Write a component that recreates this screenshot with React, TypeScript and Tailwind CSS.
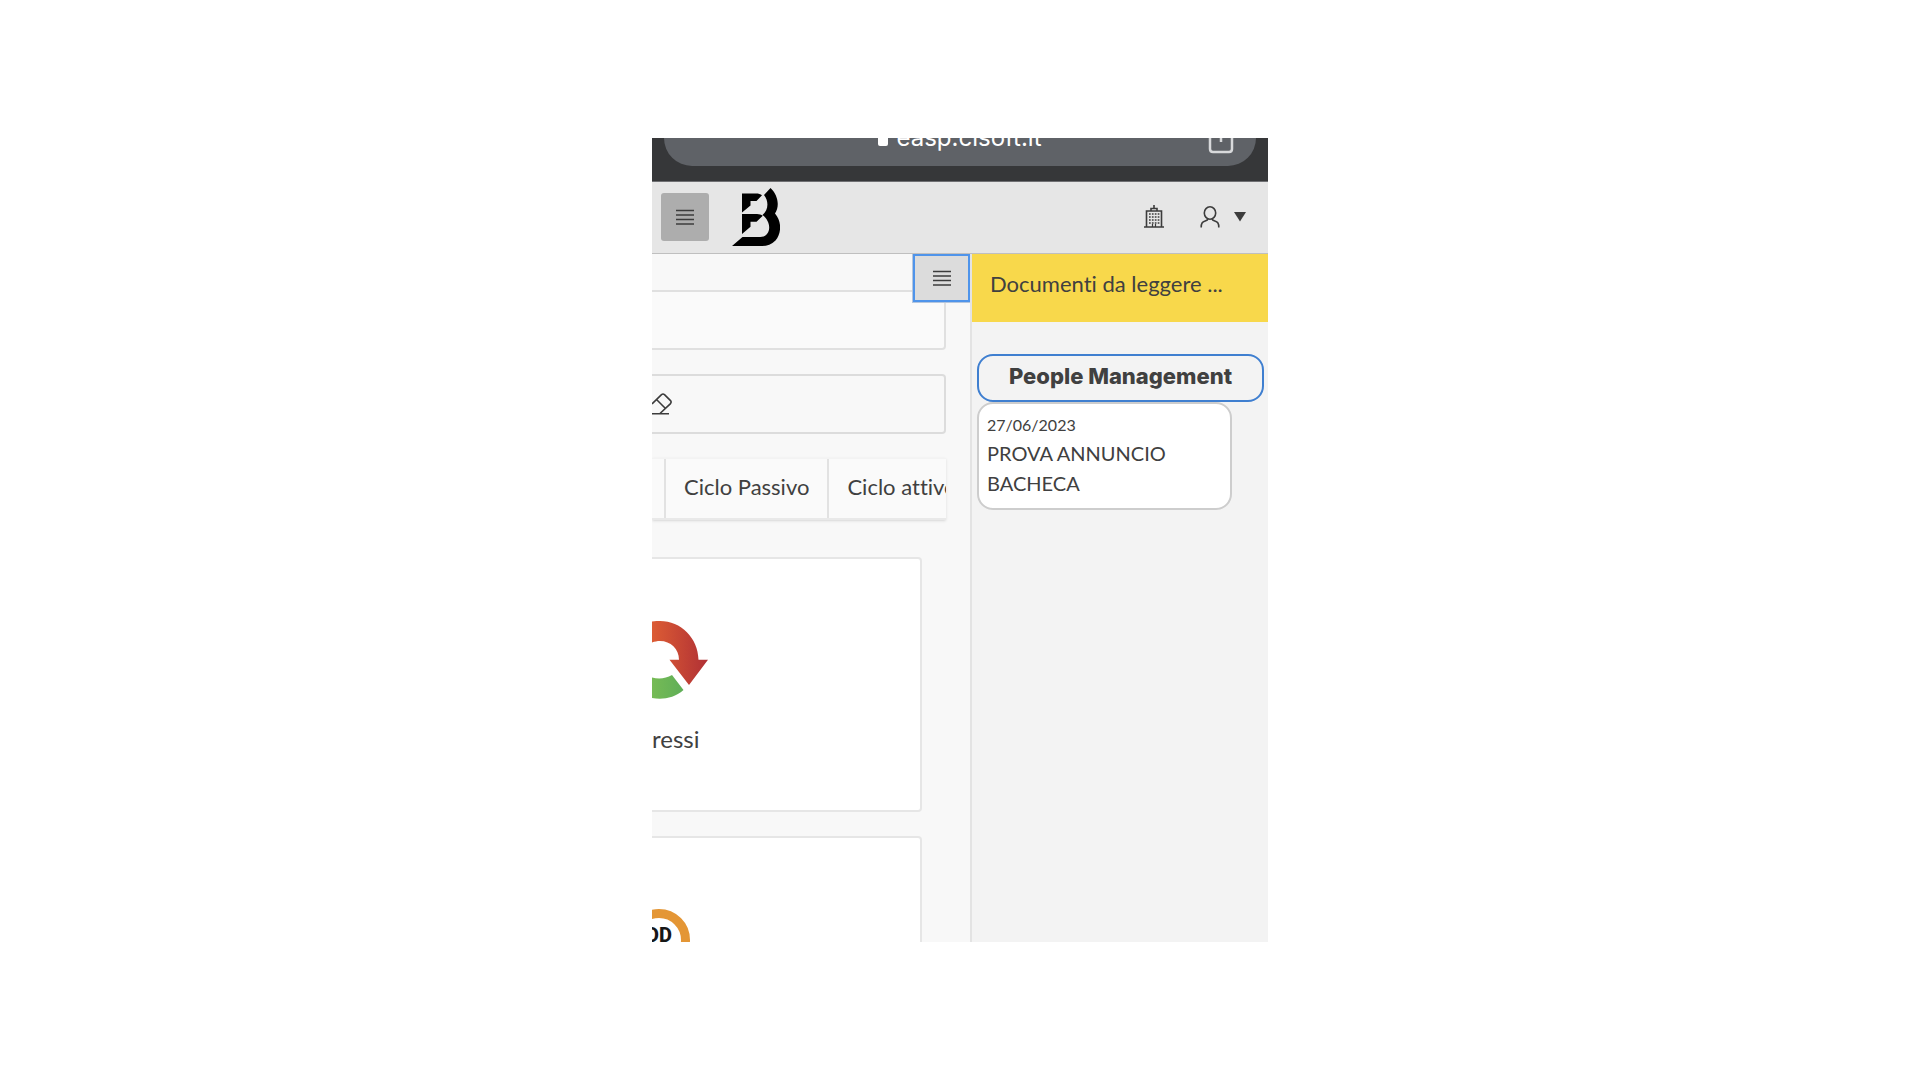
import type { ReactNode } from 'react'

const tabs = ['Ciclo Passivo', 'Ciclo attivo']

const MenuLines = () => (
  <svg width="18" height="16" viewBox="0 0 18 16" aria-hidden="true">
    <path
      d="M0 1.500h18M0 6h18M0 10.500h18M0 15h18"
      stroke="#3c3c3c"
      strokeWidth="1.600"
    />
  </svg>
)

const Logo = () => (
  <svg width="48" height="58" viewBox="0 0 48 58" aria-hidden="true">
    <path d="M10 5.500h14c2.500 0 4.500.7 6 1.700l-5.500 5.800h-6v4.500L10 24.500z" />
    <path d="M10 26h15c2.300 0 4.300.8 5.800 1.700l-6.300 6h-6v5L10 46z" />
    <path d="M32 7l6.500-7C46 7 48 18 43 25.500c7 8 6.500 20 .5 27-4 4-8.500 5.500-14 5.500H0l10.500-9H28c11 0 12.500-14.500 2.500-22 6-5 6.500-14 1.500-20z" />
  </svg>
)

const Building = () => (
  <svg
    width="20"
    height="23"
    viewBox="0 0 20 23"
    fill="none"
    stroke="#3c3c3c"
    aria-hidden="true"
  >
    <path
      d="M10 0v4M7 6V3.500h6V6M2.500 22V6h15v16M0 22h20"
      strokeWidth="1.600"
    />
    <path
      d="M5 9h10.500M5 12h10.500M5 15h10.500M5 18h10.500"
      strokeWidth="1.400"
      strokeDasharray="1.700 1.200"
    />
    <path d="M8.500 22v-3M11.500 22v-3" strokeWidth="1.200" />
  </svg>
)

const User = () => (
  <svg
    width="20"
    height="22"
    viewBox="0 0 20 22"
    fill="none"
    stroke="#3c3c3c"
    strokeWidth="1.600"
    aria-hidden="true"
  >
    <ellipse cx="10" cy="7" rx="5.700" ry="6.200" />
    <path d="M1.200 21.500c0-4.500 1-5.500 4-6.500 1.800-.6 2.500-1 2.800-2.300M18.800 21.500c0-4.500-1-5.500-4-6.500-1.800-.6-2.500-1-2.800-2.300" />
  </svg>
)

const Eraser = () => (
  <svg
    width="20"
    height="22"
    viewBox="0 0 20 22"
    fill="none"
    stroke="#3c3c3c"
    strokeWidth="1.600"
    aria-hidden="true"
  >
    <path d="M0 11L9.500 1.600q1.500-1.200 3 0l6 6q1.200 1.500 0 3L8 20.500M5 7l8.500 8.500M0 20.700h17" />
  </svg>
)

const CycleIcon = () => (
  <svg width="56" height="80" viewBox="0 0 56 80" aria-hidden="true">
    <defs>
      <linearGradient id="red" x1="0" x2="1">
        <stop offset="0" stopColor="#dc5c34" />
        <stop offset="1" stopColor="#b03035" />
      </linearGradient>
      <linearGradient id="green" x1="0" x2="1">
        <stop offset="0" stopColor="#76bb55" />
        <stop offset="1" stopColor="#5fae58" />
      </linearGradient>
    </defs>
    <path
      fill="url(#red)"
      d="M0 1.500C3 1 6 1 8 1c21 0 38 17 38.500 38.700H56L37 65 17.500 39.700H27C27 29 18.500 21 8 21c-3 0-5 .5-8 1.500z"
    />
    <path
      fill="url(#green)"
      d="M0 57.500c7 2 14 1 20-2.500L31.500 70C22 78 11 80 0 78z"
    />
  </svg>
)

const PodIcon = () => (
  <svg width="40" height="64" viewBox="0 0 40 64" aria-hidden="true">
    <circle
      cx="7"
      cy="31"
      r="26.500"
      fill="none"
      stroke="#e49635"
      strokeWidth="9"
    />
    <text
      x="20"
      y="33"
      textAnchor="end"
      className="fill-neutral-900 font-['Roboto',sans-serif] text-xl font-extrabold"
    >
      DD
    </text>
  </svg>
)

const BrowserBar = () => (
  <div className="flex h-11 shrink-0 items-end overflow-hidden border-b border-[#6f7073] bg-[#363739] px-3 pb-[15px]">
    <div className="relative flex h-14 flex-1 items-end justify-center gap-2 rounded-[28px] bg-[#5f6267] pb-3 text-white">
      <span className="mb-2 h-6 w-[10px] rounded-[2px] bg-white" />
      <span className="font-['Inter',sans-serif] text-2xl leading-8">
        easp.cisoft.it
      </span>
      <svg
        className="absolute right-[22px] bottom-3"
        width="26"
        height="34"
        viewBox="0 0 26 34"
        fill="none"
        stroke="#d8d9db"
        strokeWidth="2.500"
        aria-hidden="true"
      >
        <path d="M8 10H5q-3 0-3 3v16q0 3 3 3h16q3 0 3-3V13q0-3-3-3h-3M13 3v19" />
      </svg>
    </div>
  </div>
)

const Header = () => (
  <header className="flex h-[72px] shrink-0 items-center border-b border-[#bfbfbf] bg-[#e6e6e6] pr-[22px] pb-[2px] pl-[9px]">
    <button
      aria-label="Menu"
      className="flex size-12 items-center justify-center rounded-[3px] bg-[#adadad]"
    >
      <MenuLines />
    </button>
    <a href="#" aria-label="Home" className="ml-[23px]">
      <Logo />
    </a>
    <div className="ml-auto flex items-center">
      <button aria-label="Azienda">
        <Building />
      </button>
      <button aria-label="Utente" className="ml-9 flex items-center gap-[14px]">
        <User />
        <svg width="12" height="10" viewBox="0 0 12 10" aria-hidden="true">
          <path d="M0 0h12L6 9.500z" fill="#3c3c3c" />
        </svg>
      </button>
    </div>
  </header>
)

const Card = ({ children }: { children: ReactNode }) => (
  <div className="mr-6 h-[255px] shrink-0 rounded-r-sm border-y-2 border-r-2 border-[#e6e6e6] bg-white">
    {children}
  </div>
)

const Content = () => (
  <main className="relative flex min-w-0 flex-1 flex-col overflow-hidden bg-[#f8f8f8] pt-9 pr-6">
    <button
      aria-label="Mostra bacheca"
      className="absolute top-0 right-0 flex h-12 w-[57px] items-center justify-center border-2 border-[#4f94ea] bg-[#dcdcdc] ring-1 ring-[#b4c6de]"
    >
      <MenuLines />
    </button>
    <div className="h-[60px] shrink-0 rounded-r-sm border-y-2 border-r-2 border-[#e0e0e0] bg-[#fafafa]" />
    <div className="mt-6 flex h-[60px] shrink-0 items-center rounded-r-sm border-y-2 border-r-2 border-[#dcdcdc]">
      <button aria-label="Cancella">
        <Eraser />
      </button>
    </div>
    <nav className="mt-6 flex h-[62px] shrink-0 overflow-hidden border-t border-b-2 border-t-[#f3f3f3] border-b-[#e9e9e9] bg-[#fafafa] pl-3 shadow-sm">
      {tabs.map((tab) => (
        <a
          key={tab}
          href="#"
          className="flex shrink-0 items-center border-l-2 border-[#e2e2e2] px-[18px] pb-1 text-[22px]"
        >
          {tab}
        </a>
      ))}
    </nav>
    <div className="mt-[37px] flex flex-col gap-6">
      <Card>
        <div className="pt-[61px]">
          <CycleIcon />
          <p className="mt-[23px] text-2xl">ressi</p>
        </div>
      </Card>
      <Card>
        <div className="pt-[71px]">
          <PodIcon />
        </div>
      </Card>
    </div>
  </main>
)

const Sidebar = () => (
  <aside className="w-[298px] shrink-0 border-l-2 border-[#e3e3e3] bg-[#f3f3f3]">
    <div className="h-[68px] bg-[#f8d84b] px-[18px] pt-[14px] text-[22px] leading-8">
      Documenti da leggere ...
    </div>
    <div className="pt-8 pr-1 pl-[5px]">
      <h2 className="h-12 rounded-2xl border-2 border-[#3f7fd0] text-center font-['Inter',sans-serif] text-[22px] leading-10 font-extrabold">
        People Management
      </h2>
      <div className="mr-8 rounded-2xl border-2 border-[#cdcdcd] bg-white px-2 pt-2 pb-[10px]">
        <p className="text-base leading-[26px]">27/06/2023</p>
        <p className="text-xl leading-[30px]">PROVA ANNUNCIO BACHECA</p>
      </div>
    </div>
  </aside>
)

const App = () => {
  return (
    <div className="h-screen bg-white py-[138px] font-['Lato',sans-serif] text-[#404040] [font-variant-ligatures:none]">
      <div className="mx-auto flex h-full w-full max-w-[616px] flex-col overflow-hidden">
        <BrowserBar />
        <Header />
        <div className="flex min-h-0 flex-1">
          <Content />
          <Sidebar />
        </div>
      </div>
    </div>
  )
}

export default App
